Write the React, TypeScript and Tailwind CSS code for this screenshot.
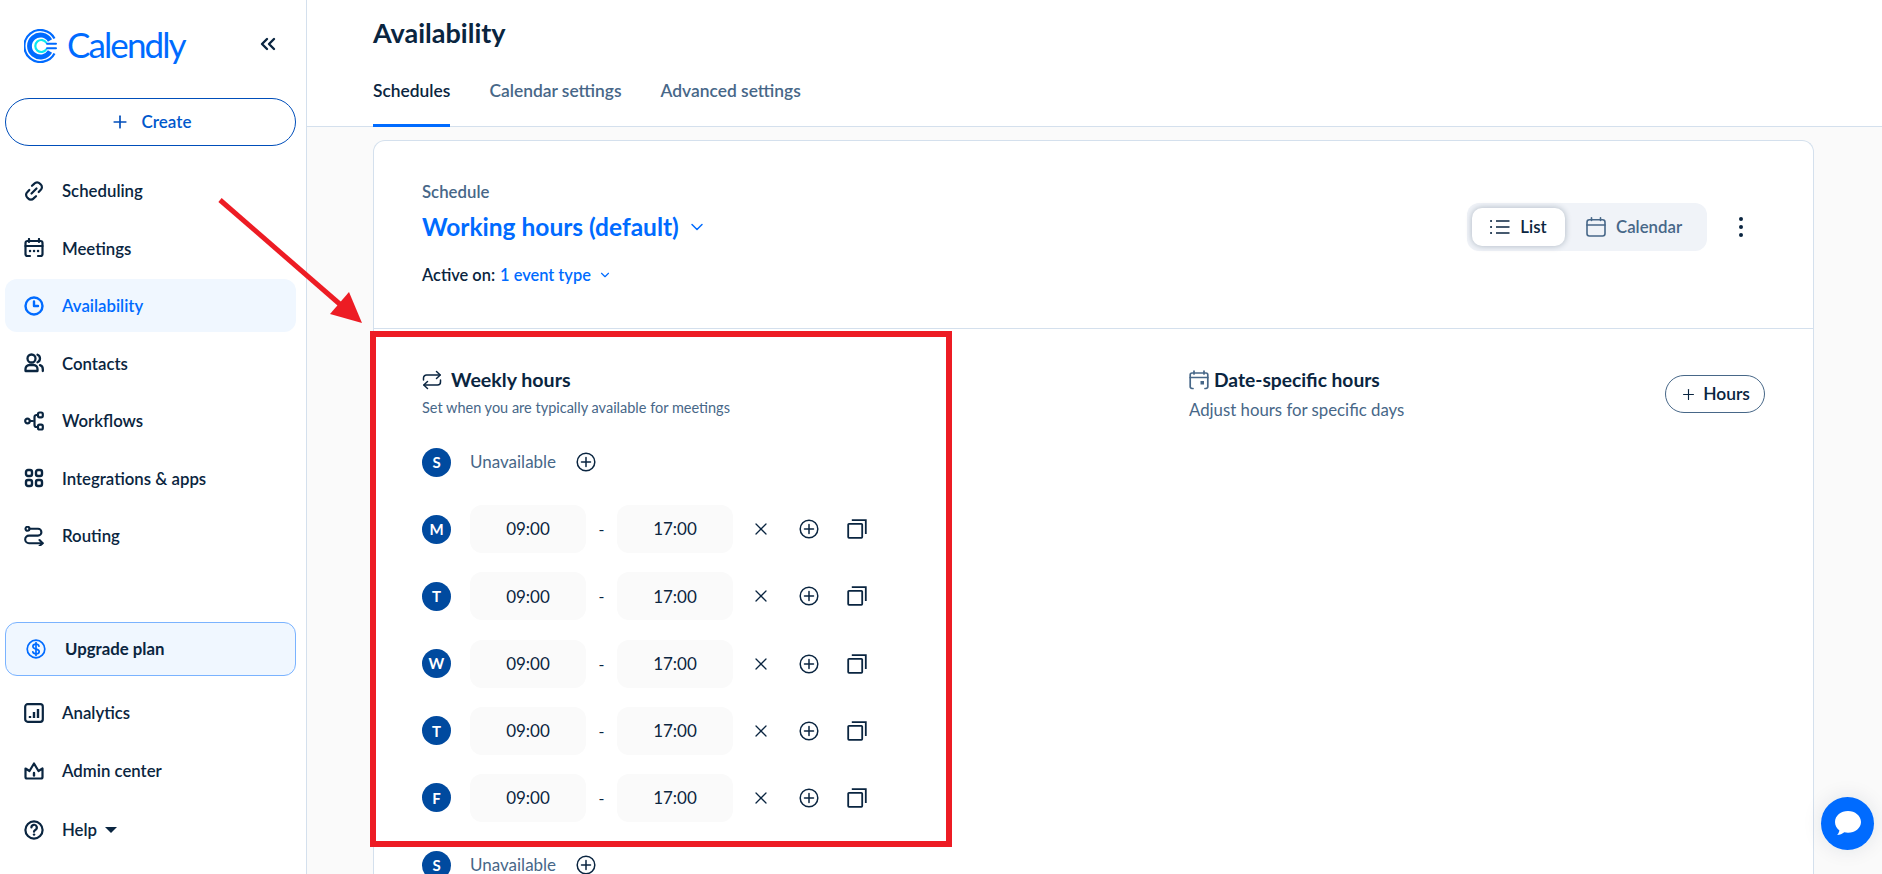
import React from "react";
import { ChevronDown, ChevronsLeft, Plus, X } from "lucide-react";

type NavItem = {
  label: string;
  icon: React.ReactNode;
  active?: boolean;
};

const Ico: React.FC<{ size?: number; sw?: number; className?: string; children: React.ReactNode }> = ({
  size = 20,
  sw = 2,
  className = "",
  children,
}) => (
  <svg
    width={size}
    height={size}
    viewBox="0 0 20 20"
    fill="none"
    stroke="currentColor"
    strokeWidth={sw}
    strokeLinecap="round"
    strokeLinejoin="round"
    className={`shrink-0 ${className}`}
  >
    {children}
  </svg>
);

const LinkIcon = () => (
  <Ico sw={2.200}>
    <path d="M8 4.800 10.400 2.600a3.700 3.700 0 0 1 5.400 0l1 .9a3.700 3.700 0 0 1 0 5.300L14.700 11" />
    <path d="M12 15.200 9.600 17.400a3.700 3.700 0 0 1-5.400 0l-1-.9a3.700 3.700 0 0 1 0-5.300L5.300 9" />
    <path d="M12.500 7.500 7.500 12.500" />
  </Ico>
);
const MeetingsIcon = () => (
  <Ico sw={2.200}>
    <path d="M5 1v3M15 1v3" />
    <path d="M6 18H3.500A2 2 0 0 1 1.500 16V5A2 2 0 0 1 3.500 3h13a2 2 0 0 1 2 2v11a2 2 0 0 1-2 2H14" />
    <path d="M1.500 8h17" />
    <path d="M6 13h.1M10 13h.1M14 13h.1" strokeWidth={2.400} />
  </Ico>
);
const ClockIcon = () => (
  <Ico sw={2.400}>
    <circle cx="10" cy="10" r="8.500" />
    <path d="M10 5.500V10h4" />
  </Ico>
);
const ContactsIcon = () => (
  <Ico sw={2.300}>
    <circle cx="7.500" cy="5.500" r="4" />
    <path d="M1.500 18v-2a4 4 0 0 1 4-4h4a4 4 0 0 1 4 4v2z" />
    <path d="M13.500 1.800a4 4 0 0 1 0 7.400M16 12.200a4 4 0 0 1 2.800 3.800v2" />
  </Ico>
);
const WorkflowsIcon = () => (
  <Ico sw={2.200}>
    <circle cx="3.500" cy="10" r="2.300" />
    <rect x="14" y="1.500" width="4.800" height="4.800" rx="1.600" />
    <rect x="14" y="13.700" width="4.800" height="4.800" rx="1.600" />
    <path d="M5.800 10h2.700M14 4h-1.500a2 2 0 0 0-2 2v8a2 2 0 0 0 2 2H14" />
  </Ico>
);
const AppsIcon = () => (
  <Ico sw={2.400}>
    <rect x="2" y="2" width="6" height="6" rx="2" />
    <rect x="12" y="2" width="6" height="6" rx="2" />
    <rect x="2" y="12" width="6" height="6" rx="2" />
    <rect x="12" y="12" width="6" height="6" rx="2" />
  </Ico>
);
const RoutingIcon = () => (
  <Ico sw={2.100}>
    <circle cx="3.500" cy="2.800" r="2" />
    <path d="M5.500 2.800H14a3.400 3.400 0 0 1 0 6.800H5a3.800 3.800 0 0 0 0 7.600h13.500" />
    <path d="m15.500 14 3.200 3.200-3.200 2.800" />
  </Ico>
);
const AnalyticsIcon = () => (
  <Ico sw={2.200}>
    <rect x="1.200" y="1.200" width="17.600" height="17.600" rx="2.500" />
    <path d="M6 15v-2M10 15V9M14 15V6" strokeWidth={2.400} strokeLinecap="butt" />
  </Ico>
);
const CrownIcon = () => (
  <Ico sw={2.200}>
    <path d="M1.500 7.500 5.500 10 10 2.500 14.500 10l4-2.500V16a1.500 1.500 0 0 1-1.500 1.500H3A1.500 1.500 0 0 1 1.500 16z" />
    <path d="M10 12v2.500" strokeWidth={2.400} />
  </Ico>
);
const HelpIcon = () => (
  <Ico sw={2.200}>
    <circle cx="10" cy="10" r="8.600" />
    <path d="M7.400 7.500a2.700 2.700 0 1 1 3.900 2.400c-.8.400-1.300 1-1.300 1.800" />
    <path d="M10 14.600h.1" strokeWidth={2.400} />
  </Ico>
);
const DollarIcon = () => (
  <Ico sw={1.700}>
    <circle cx="10" cy="10" r="8.800" />
    <path d="M13 7.200c-.3-1.200-1.500-2-3-2-1.800 0-3.100.9-3.100 2.400 0 3.400 6.300 1.500 6.300 4.900 0 1.500-1.400 2.400-3.200 2.400-1.600 0-2.900-.8-3.200-2.100" />
    <path d="M10 3.500v13" />
  </Ico>
);
const PlusCircle: React.FC = () => (
  <Ico sw={1.500} className="text-[#0a2540]">
    <circle cx="10" cy="10" r="8.800" />
    <path d="M10 5.500v9M5.500 10h9" />
  </Ico>
);
const CopyIcon: React.FC = () => (
  <Ico sw={1.800} className="text-[#0a2540]">
    <rect x="1.200" y="4.800" width="14" height="14" rx="0.800" strokeLinejoin="miter" />
    <path d="M4.800 1.200H18.800V15" strokeLinecap="butt" strokeLinejoin="miter" />
  </Ico>
);
const RepeatIcon = () => (
  <Ico sw={1.500} className="text-[#0a2540]">
    <path d="M1.500 10V8a3 3 0 0 1 3-3H18" />
    <path d="m14.500 1.500 3.700 3.500-3.700 3.500" />
    <path d="M18.500 10v2a3 3 0 0 1-3 3H2" />
    <path d="M5.500 11.500 1.800 15l3.700 3.500" />
  </Ico>
);
const DateIcon = () => (
  <Ico sw={1.700} className="text-[#476788]">
    <path d="M5 1v3M15 1v3" />
    <path d="M4 18.500H3A1.800 1.800 0 0 1 1.200 16.700V4.800A1.800 1.800 0 0 1 3 3h14a1.800 1.800 0 0 1 1.800 1.800v11.900a1.800 1.800 0 0 1-1.800 1.800h-1" />
    <path d="M1.200 7.500h17.600" />
    <rect x="11.500" y="11" width="3.500" height="3.500" fill="currentColor" stroke="none" />
  </Ico>
);
const ListIcon = () => (
  <Ico sw={1.500} className="text-[#0a2540]">
    <path d="M6 4h13.500M6 10h13.500M6 16h13.500" strokeLinecap="butt" />
    <path d="M1 4h.1M1 10h.1M1 16h.1" strokeWidth={2} />
  </Ico>
);
const CalendarIcon = () => (
  <Ico sw={1.600} className="text-[#476788]">
    <path d="M5.500 .800v2.700M14.500 .800v2.700" />
    <rect x="1" y="2.800" width="18" height="16.200" rx="2.400" />
    <path d="M1 8h18" />
  </Ico>
);

const LogoMark = () => (
  <svg width="34" height="34" viewBox="0 0 34 34" fill="none" className="shrink-0">
    <path d="M30.500 9.500A16 16 0 1 0 30.500 24.500" stroke="#006bff" strokeWidth="2.200" />
    <path d="M26 11.500A11 11 0 1 0 26 22.500" stroke="#006bff" strokeWidth="4.800" />
    <path d="M22.500 14A6 6 0 1 0 22.500 20" stroke="#0ae8f0" strokeWidth="2.200" />
    <path d="M23 14.800h9M23 19.200h9" stroke="#006bff" strokeWidth="2" strokeLinecap="round" />
  </svg>
);

const topNav: NavItem[] = [
  { label: "Scheduling", icon: <LinkIcon /> },
  { label: "Meetings", icon: <MeetingsIcon /> },
  { label: "Availability", icon: <ClockIcon />, active: true },
  { label: "Contacts", icon: <ContactsIcon /> },
  { label: "Workflows", icon: <WorkflowsIcon /> },
  { label: "Integrations & apps", icon: <AppsIcon /> },
  { label: "Routing", icon: <RoutingIcon /> },
];

const bottomNav: NavItem[] = [
  { label: "Analytics", icon: <AnalyticsIcon /> },
  { label: "Admin center", icon: <CrownIcon /> },
];

const NavRow: React.FC<{ item: NavItem }> = ({ item }) => (
  <div
    className={`flex h-[53px] items-center gap-[18px] rounded-xl pl-[19px] text-[16.800px] font-semibold ${
      item.active ? "bg-[#f0f7ff] text-[#006bff]" : "text-[#0a2540]"
    }`}
  >
    {item.icon}
    <span>{item.label}</span>
  </div>
);

const DayBadge: React.FC<{ day: string }> = ({ day }) => (
  <div className="flex h-[29px] w-[29px] shrink-0 items-center justify-center rounded-full bg-[#004a9f] text-[15px] font-bold text-white">
    {day}
  </div>
);

const TimeBox: React.FC<{ value: string }> = ({ value }) => (
  <div className="flex h-[48px] w-[116px] items-center justify-center rounded-xl bg-[#fafafa] text-[17px] text-[#0a2540]">
    {value}
  </div>
);

const UnavailableRow: React.FC = () => (
  <div className="flex h-[48px] items-center">
    <DayBadge day="S" />
    <span className="ml-[19px] w-[106px] text-[17px] text-[#476788]">Unavailable</span>
    <PlusCircle />
  </div>
);

const HoursRow: React.FC<{ day: string }> = ({ day }) => (
  <div className="flex h-[48px] items-center">
    <DayBadge day={day} />
    <div className="ml-[19px]">
      <TimeBox value="09:00" />
    </div>
    <span className="w-[31px] text-center text-[16px] text-[#0a2540]">-</span>
    <TimeBox value="17:00" />
    <div className="ml-[18px] flex items-center gap-[28px]">
      <X size={20} strokeWidth={1.500} className="text-[#0a2540]" />
      <PlusCircle />
      <CopyIcon />
    </div>
  </div>
);

export default function App() {
  return (
    <div className="relative flex h-screen overflow-hidden bg-white font-[Lato,sans-serif] text-[#0a2540]">
      <aside className="flex w-[307px] shrink-0 flex-col border-r border-[#d4e0ed] pl-[5px] pr-[10px] pt-[26px] pb-[18px]">
        <div className="flex h-[40px] items-center pl-[19px] pr-[16px]">
          <LogoMark />
          <span className="mb-[4px] ml-[9px] text-[35px] font-normal leading-none tracking-[-1.900px] text-[#006bff]">
            Calendly
          </span>
          <ChevronsLeft size={24} strokeWidth={2.400} className="ml-auto mb-1 text-[#0a2540]" />
        </div>
        <div className="mt-[32px] flex h-[48px] w-[291px] items-center justify-center gap-[12px] rounded-full border border-[#004eba] text-[17px] font-semibold text-[#0058cc]">
          <Plus size={20} strokeWidth={2} className="text-[#004eba]" />
          Create
        </div>
        <nav className="mt-[18px] flex flex-col gap-[4.600px]">
          {topNav.map((item) => (
            <NavRow key={item.label} item={item} />
          ))}
        </nav>
        <div className="mt-auto flex flex-col">
          <div className="flex h-[54px] items-center gap-[19px] rounded-xl border border-[#7ab3ff] bg-[#f0f7ff] pl-[20px] text-[16.800px] font-bold text-[#0a2540]">
            <span className="text-[#006bff]">
              <DollarIcon />
            </span>
            Upgrade plan
          </div>
          <div className="mt-[10px] flex flex-col gap-[5.500px]">
            {bottomNav.map((item) => (
              <NavRow key={item.label} item={item} />
            ))}
            <div className="flex h-[53px] items-center gap-[18px] pl-[19px] text-[16.800px] font-semibold">
              <HelpIcon />
              <span>Help</span>
              <svg width="12" height="6" viewBox="0 0 12 6" className="-ml-[10px]">
                <path d="M0 0h12L6 6z" fill="#0a2540" />
              </svg>
            </div>
          </div>
        </div>
      </aside>

      <main className="flex min-w-0 flex-1 flex-col bg-[#fafafa]">
        <header className="h-[127px] shrink-0 border-b border-[#d4e0ed] bg-white pl-[66px]">
          <h1 className="pt-[17px] text-[27px] font-bold leading-[32px]">Availability</h1>
          <div className="mt-[21px] flex gap-[39px] text-[17.400px] font-semibold text-[#476788]">
            <div className="h-[57px] border-b-[3px] border-[#006bff] pt-[8px] text-[#0a2540]">Schedules</div>
            <div className="pt-[8px]">Calendar settings</div>
            <div className="pt-[8px]">Advanced settings</div>
          </div>
        </header>

        <div className="ml-[66px] mr-[68px] mt-[13px] flex-1 rounded-t-xl border border-b-0 border-[#d4e0ed] bg-white">
          <div className="flex h-[188px] items-start justify-between border-b border-[#d4e0ed] pl-[48px] pr-[70px]">
            <div className="pt-[41px]">
              <div className="text-[16.800px] font-semibold leading-5 text-[#476788]">Schedule</div>
              <div className="mt-[9px] flex items-center gap-[8px] text-[24.500px] font-bold leading-8 text-[#006bff]">
                Working hours (default)
                <ChevronDown size={20} strokeWidth={1.800} />
              </div>
              <div className="mt-[22px] flex items-center text-[16.400px] font-semibold leading-5">
                <span>Active on:</span>
                <span className="ml-[5px] text-[#006bff]">1 event type</span>
                <ChevronDown size={14} strokeWidth={2} className="ml-[7px] text-[#006bff]" />
              </div>
            </div>
            <div className="flex items-center pt-[62px]">
              <div className="flex h-[48px] w-[240px] items-center rounded-xl bg-[#f0f3f8] pl-[5px]">
                <div className="flex h-[38px] w-[93px] items-center justify-center gap-[10px] rounded-[10px] bg-white text-[16.800px] font-semibold shadow-[0_0_6px_rgba(10,37,64,0.3)]">
                  <ListIcon />
                  List
                </div>
                <div className="ml-[21px] flex items-center gap-[10px] text-[16.800px] font-semibold text-[#476788]">
                  <CalendarIcon />
                  Calendar
                </div>
              </div>
              <div className="ml-[32px] flex w-[4px] flex-col gap-[4px]">
                <span className="h-[4px] w-[4px] rounded-full bg-[#0a2540]" />
                <span className="h-[4px] w-[4px] rounded-full bg-[#0a2540]" />
                <span className="h-[4px] w-[4px] rounded-full bg-[#0a2540]" />
              </div>
            </div>
          </div>

          <div className="flex pl-[48px] pr-[48px]">
            <section className="w-[767px] shrink-0 pt-[41px]">
              <div className="flex items-center gap-[9px] text-[19.600px] font-bold leading-5">
                <RepeatIcon />
                Weekly hours
              </div>
              <p className="mt-[8px] text-[14.500px] leading-5 text-[#476788]">
                Set when you are typically available for meetings
              </p>
              <div className="mt-[20px] flex flex-col gap-[19.200px]">
                <UnavailableRow />
                {["M", "T", "W", "T", "F"].map((d, i) => (
                  <HoursRow key={i} day={d} />
                ))}
                <UnavailableRow />
              </div>
            </section>
            <section className="flex flex-1 items-start justify-between pt-[41px]">
              <div>
                <div className="flex items-center gap-[5px] text-[19.200px] font-bold leading-5">
                  <DateIcon />
                  Date-specific hours
                </div>
                <p className="mt-[10px] text-[16.800px] leading-5 text-[#476788]">Adjust hours for specific days</p>
              </div>
              <div className="mt-[5px] flex h-[38px] w-[100px] items-center justify-center gap-[6px] rounded-full border border-[#476788] text-[17.400px] font-semibold">
                <Plus size={17} strokeWidth={1.600} />
                Hours
              </div>
            </section>
          </div>
        </div>
      </main>

      {/* annotation over the screenshot */}
      <div className="absolute left-[370px] top-[331px] h-[516px] w-[582px] border-[6px] border-[#ed1c24]" />
      <svg className="absolute left-[210px] top-[190px]" width="170" height="150" viewBox="0 0 170 150" fill="none">
        <path d="M10 10 132 116" stroke="#ed1c24" strokeWidth="5" />
        <path d="M152 133 120 124 139 102z" fill="#ed1c24" />
      </svg>

      <div className="absolute left-[1821px] top-[797px] flex h-[53px] w-[53px] items-center justify-center rounded-full bg-[#006bff] shadow-[0_0_20px_rgba(10,37,64,0.1)]">
        <svg width="28" height="27" viewBox="0 0 28 27" fill="white">
          <path d="M14 1C7 1 1 5.500 1 12c0 3.500 1.700 6.400 4.400 8.400-.3 1.800-1.200 3.400-2.400 4.600 2.800-.1 5.400-1.100 7.300-2.700 1.200.3 2.400.4 3.700.4 7 0 13-4.500 13-10.700S21 1 14 1z" />
        </svg>
      </div>
    </div>
  );
}
